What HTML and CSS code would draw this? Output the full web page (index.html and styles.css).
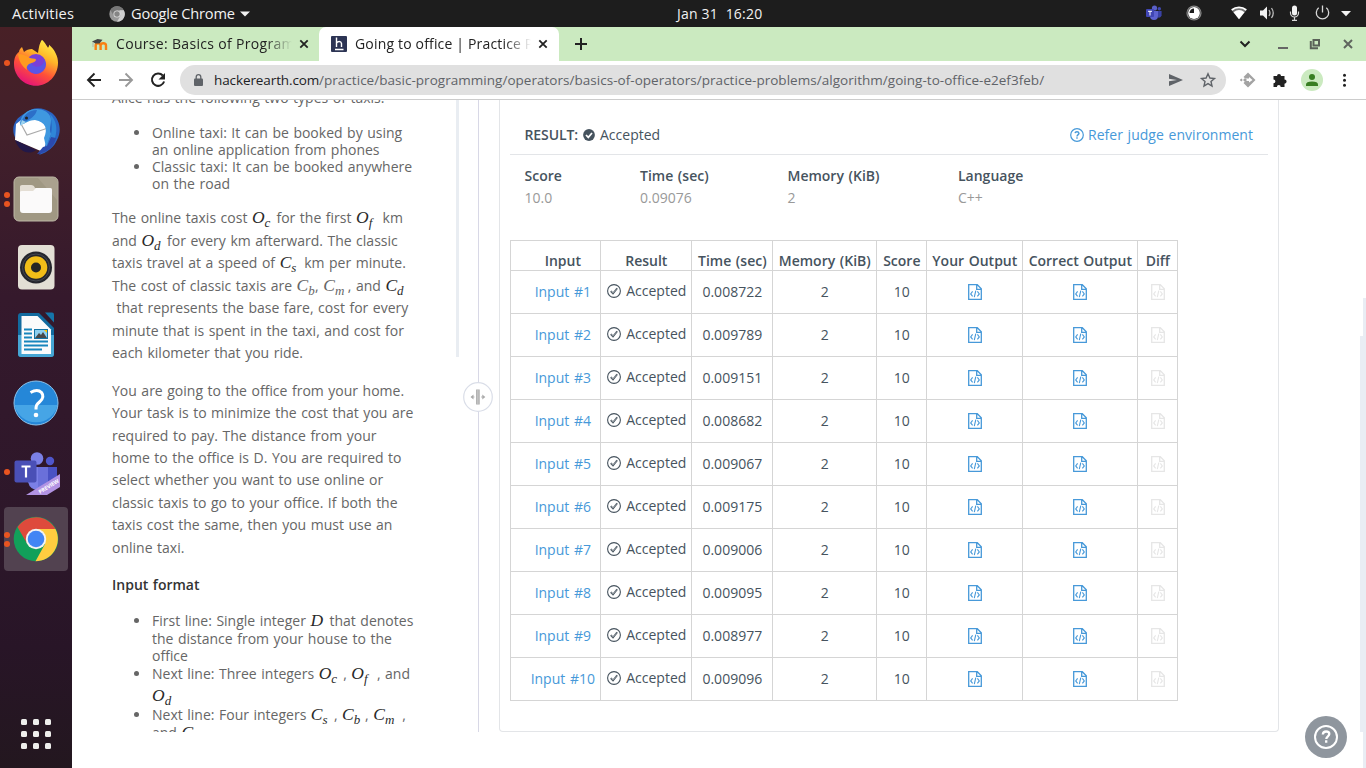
FILE: index.html
```html
<!DOCTYPE html>
<html lang="en">
<head>
<meta charset="utf-8">
<title>Going to office | Practice Problems</title>
<link rel="stylesheet" href="styles.css">
</head>
<body>
<svg class="defs" width="0" height="0">
  <symbol id="file" viewBox="0 0 14 16"><path d="M.7.7h8.600l4 4v10.600H.7z M8.700 .7v4.600h4.600" fill="none" stroke="currentColor" stroke-width="1.300"/><path d="M4.600 7.400 2.700 9.900l1.900 2.500M9.400 7.400l1.900 2.500-1.900 2.500M7.800 6.700l-1.500 6.500" fill="none" stroke="currentColor" stroke-width="1.100"/></symbol>
  <symbol id="ok" viewBox="0 0 14 14"><circle cx="7" cy="7" r="6.400" fill="none" stroke="currentColor" stroke-width="1.100"/><path d="M3.800 7.200 6 9.500l4.200-5.200" fill="none" stroke="currentColor" stroke-width="1.800"/><path d="M4.200 7.400 6 9.100l3.900-4.600" fill="none" stroke="#fff" stroke-width=".4"/></symbol>
</svg>
<div class="topbar">
  <span class="act">Activities</span>
  <svg class="tchrome" width="16" height="16" viewBox="0 0 16 16"><circle cx="8" cy="8" r="7.700" fill="#999"/><path d="M1.400 4A7.700 7.700 0 0 1 14.800 4.200H8L4.700 9.800z" fill="#777"/><path d="M14.800 4.200A7.700 7.700 0 0 1 8 15.700l3.400-5.800L10.500 4.200z" fill="#d0d0d0"/><circle cx="8" cy="8" r="3.600" fill="#ddd"/><circle cx="8" cy="8" r="2.700" fill="#858585"/></svg>
  <span class="app">Google Chrome</span>
  <svg class="caret" width="10" height="6" viewBox="0 0 10 6"><path d="M0 .4h10L5 5.600z" fill="#f2f2f2"/></svg>
  <span class="clock">Jan 31&nbsp; 16:20</span>
  <div class="tray">
    <svg width="222" height="27" viewBox="1144 0 222 27">
      <circle cx="1154.500" cy="8" r="2.600" fill="#5a60c8"/><circle cx="1159.300" cy="8.800" r="1.700" fill="#4048b0"/><path d="M1150 11h8v5a4 4 0 0 1-8 0z" fill="#5d62d0"/><path d="M1158 11h3.600v4.500a3 3 0 0 1-3.600 2z" fill="#3a42a5"/><rect x="1146" y="9" width="8" height="8" rx="1" fill="#4046b4"/><path d="M1148 11.300h4M1150 11.300v4.200" stroke="#fff" stroke-width="1"/>
      <circle cx="1194" cy="13" r="7.600" fill="#888"/><circle cx="1194" cy="13" r="6.300" fill="#1d1d1d"/><circle cx="1194" cy="13" r="5.900" fill="#fff"/><path d="M1194 13h-4.500a4.500 4.500 0 0 1 4.500-4.500z" fill="#1d1d1d"/>
      <path d="M1231.500 10a11.500 11.500 0 0 1 15 0l-7.500 9.300z" fill="#777"/><path d="M1233.500 12.200a9 9 0 0 1 11 0l-5.500 7.100z" fill="#fff"/><path d="M1231.700 10a11.500 11.500 0 0 1 14.600 0" stroke="#fff" stroke-width="1.800" fill="none"/>
      <path d="M1260 10.500h3l4-4v13l-4-4h-3z" fill="#f2f2f2"/><path d="M1269 10q2 3 0 6M1271.500 8q3.500 5 0 10" stroke="#bbb" stroke-width="1.300" fill="none"/>
      <rect x="1292" y="5.500" width="5" height="10" rx="2.500" fill="#f2f2f2"/><path d="M1290.500 11.500v1.500a4 4 0 0 0 8 0v-1.500M1294.500 17v3.300M1292 20.300h5" stroke="#d8d8d8" stroke-width="1.200" fill="none"/>
      <path d="M1318.700 7.800a6.200 6.200 0 1 0 7.600 0M1322.500 5.500v7" stroke="#d8d8d8" stroke-width="1.300" fill="none"/>
      <path d="M1341 11h10l-5 5.300z" fill="#f2f2f2"/>
    </svg>
  </div>
</div>
<div class="desk">
  <nav class="dock">
    <div class="app-slot s1"><i class="dots"><b></b></i>
      <svg width="48" height="48" viewBox="0 0 48 48"><defs><linearGradient id="ff" x1=".8" y1="0" x2=".3" y2="1"><stop offset="0" stop-color="#fff44a"/><stop offset=".35" stop-color="#ffb529"/><stop offset=".65" stop-color="#ff5038"/><stop offset="1" stop-color="#e3107c"/></linearGradient></defs><path d="M30 .8c3 3 4 5 6 8 1-1 1-2 1-3 6 5 9 12 9 18 0 13-10 23-22 23S2 37 2 25c0-6 2-10 5-12 0-2 1-3 3-5l2 5c2-2 5-3 8-3l6 4c1-5 1-9 4-13.200z" fill="url(#ff)"/><circle cx="24" cy="25" r="10" fill="#7a3fd8"/><path d="M14 25a10 10 0 0 0 19 4c1-3 1-6-1-9 1 7-7 9-10 7-4-2-2-5 2-6-4-3-8-2-10 4z" fill="#5a55e6"/><path d="M6 15c5 0 9 2 12 4 3 1 6 0 6 2-1 3-6 3-7 4-2 2-3 3-2 6-5-4-8-8-9-16z" fill="#ff9a20"/></svg></div>
    <div class="app-slot s2">
      <svg width="48" height="48" viewBox="0 0 48 48"><path d="M14 6C20-.500 31-.500 40 6c8 7 10 18 5 27-3 7-9 12-18 15l6-7L4 32C-1 24 0 12 14 6z" fill="#2a63c2"/><path d="M38 7c6 6 8 14 5 24-2 6-6 10-12 14l6-12c4-9 3-17 1-26z" fill="#2f86d8"/><path d="m4 17 9-7 22 2 1 18-5 15L3 33z" fill="#fff"/><path d="m8 15 7 13 21-7" stroke="#aaa" stroke-width="1.200" fill="none"/><path d="M8 18c0-9 6-16 17-16 6 0 11 3 13 7 3 6-2 12 1 18l-5 13-2-9c4-9 2-16-9-18-6 0-8 3-15 5z" fill="#3f98e0"/><path d="M9 17c2-8 7-14 16-14-2 7-7 9-12 12z" fill="#2c6fc8"/><path d="m8 19 2-6 4 2z" fill="#9fd4ee"/><circle cx="14.500" cy="11" r="1.500" fill="#222"/><path d="m3 33 21 10c-8 6-17 1-21-10z" fill="#221849"/><path d="m25 47 6-7 4-1 4-9 5 1c-2 9-9 15-19 16z" fill="#2b49ad"/></svg></div>
    <div class="app-slot s3"><i class="dots"><b></b><b></b></i>
      <svg width="48" height="48" viewBox="0 0 48 48"><rect x="2" y="2" width="44" height="44" rx="5" fill="#a09883" stroke="#beb8a7"/><path d="M26 3h15q4 0 4 4v18z" fill="#aaa18e"/><path d="M8 13V11.500Q8 10 10 10h9q3 0 4 3h15q2 0 2 2v4H8z" fill="#e4ded4"/><path d="M8 17q0-1 2-1h11l3-3h14q2 0 2 2v20q0 3-3 3H11q-3 0-3-3z" fill="#fbfafa"/></svg></div>
    <div class="app-slot s4">
      <svg width="48" height="48" viewBox="0 0 48 48"><rect x="6" y="2" width="36.500" height="44.500" rx="4" fill="#e3dfd5"/><circle cx="24" cy="24.500" r="16" fill="#25262d"/><circle cx="24" cy="24.500" r="13.500" fill="none" stroke="#454850"/><circle cx="24" cy="24.500" r="11.300" fill="#f1bd18"/><circle cx="24" cy="24.500" r="5" fill="#252525"/></svg></div>
    <div class="app-slot s5">
      <svg width="48" height="48" viewBox="0 0 48 48"><path d="M9 2h18l15 15v26q0 3-3 3H9q-3 0-3-3V5q0-3 3-3z" fill="#126b9f"/><path d="M6 24h36v19q0 3-3 3H9q-3 0-3-3z" fill="#46a6d4"/><path d="M33 1.500h7q2 0 2 2v8z" fill="#1575a9"/><path d="M9.500 5h16L39 18.500V43H9.500z" fill="#fbfbfb"/><path d="M12 18.500h8M12 22.500h8M12 26.500h8M12 30.500h24M12 34.500h24M12 38.500h18" stroke="#1786bd" stroke-width="1.800"/><rect x="22.500" y="18.500" width="13" height="9" fill="#8dd0f0" stroke="#1474a5"/><path d="m23 27 4-5 2 2 2-3 4 6z" fill="#47494a"/><path d="M32 19h3v3z" fill="#ffc400"/></svg></div>
    <div class="app-slot s6">
      <svg width="48" height="48" viewBox="0 0 48 48"><circle cx="24" cy="24" r="22" fill="#2587d8" stroke="#8cc4ed"/><path d="M2.500 26h43a22 22 0 0 1-43 0z" fill="#46a5e6"/><path d="M18.500 13.500q7-4 11 0c3 4 1 7-2 9.500-3 2.500-3.500 3.500-3.500 7.500" stroke="#fff" stroke-width="3" fill="none"/><circle cx="24" cy="36" r="2.300" fill="#fff"/></svg></div>
    <div class="app-slot s7"><i class="dots"><b></b></i>
      <svg width="48" height="48" viewBox="0 0 48 48"><circle cx="25" cy="10.500" r="6.300" fill="#7b80e6"/><circle cx="38" cy="13" r="4.200" fill="#4f56cb"/><path d="M30 19h15v14q-3 7-12 6z" fill="#4a52c4"/><path d="M16 19h20v14q-2 9-10 9t-10-8z" fill="#7b80e6"/><path d="M26 19h10v15l-10 5z" fill="#6a70da"/><rect x="2.500" y="12.500" width="22" height="22" rx="2" fill="#4a50b6"/><path d="M9.500 18.500h9M14 18.500v11" stroke="#fff" stroke-width="2.200"/><path d="M14 47 48 26v13L35 47z" fill="#b293e3"/><text class="preview" transform="translate(28 46) rotate(-32)">PREVIEW</text></svg></div>
    <div class="app-slot s8"><i class="dots"><b></b><b></b></i>
      <svg width="48" height="48" viewBox="0 0 48 48"><circle cx="24" cy="24" r="22.300" fill="#11a05a"/><path d="M5.500 12A22.300 22.300 0 0 1 43.500 14H24l-8.700 15z" fill="#de4a3c"/><path d="M43.500 14A22.300 22.300 0 0 1 23.500 46.300L33 29 24 14z" fill="#ffcd40"/><circle cx="24" cy="24" r="10.200" fill="#f3f3f3"/><circle cx="24" cy="24" r="8.300" fill="#4285f4"/></svg></div>
    <div class="grid9"><i></i><i></i><i></i><i></i><i></i><i></i><i></i><i></i><i></i></div>
  </nav>
  <main class="browser">
    <div class="tabs">
      <div class="tab">
        <svg width="16" height="16" viewBox="0 0 16 16"><path d="M3.700 14V9.500q0-2.300 2.300-2.300t2.600 2.300V14M8.600 9.500q0-2.300 2.700-2.300t2.700 2.300V14" stroke="#f98012" stroke-width="2.400" fill="none"/><path d="M0 5.500 5.500 3 10.500 3.800 7.500 7.500H3.500z" fill="#444"/><path d="M1 6v5" stroke="#aaa" stroke-width=".8"/></svg>
        <span class="tt t1">Course: Basics of Programm</span>
        <svg class="x" width="10" height="10" viewBox="0 0 10 10"><path d="m1.300 1.300 7.400 7.400M8.700 1.300 1.300 8.700" stroke="#222" stroke-width="1.800"/></svg>
      </div>
      <div class="tab on">
        <svg width="16" height="16" viewBox="0 0 16 16"><rect width="16" height="16" rx="1" fill="#2c3454"/><path d="M5.500 1.500v9.500M5.500 7q1-1.500 2.800-1.500T10.500 7.500V11M4 13.500h8.500" stroke="#fff" stroke-width="1.400" fill="none"/></svg>
        <span class="tt t2">Going to office | Practice Pr</span>
        <svg class="x" width="10" height="10" viewBox="0 0 10 10"><path d="m1.300 1.300 7.400 7.400M8.700 1.300 1.300 8.700" stroke="#222" stroke-width="1.800"/></svg>
      </div>
      <svg class="new" width="12" height="12" viewBox="0 0 12 12"><path d="M6 0v12M0 6h12" stroke="#222" stroke-width="2"/></svg>
      <svg class="wins" width="130" height="34" viewBox="1236 27 130 34"><path d="m1240.500 41.500 4.500 4.500 4.500-4.500" stroke="#222" stroke-width="2" fill="none"/><path d="M1278 48h10" stroke="#666" stroke-width="2"/><path d="M1313.500 40h5.500v5.500h-5.500zM1310.800 41v7.200h7.200" stroke="#5a6258" stroke-width="2" fill="none"/><path d="m1344 40 8 8M1352 40l-8 8" stroke="#5f655e" stroke-width="2"/></svg>
    </div>
    <div class="tools">
      <svg width="108" height="38" viewBox="72 61 108 38"><path d="M101 80H88M94.500 73.500 88 80l6.500 6.500" stroke="#222" stroke-width="1.900" fill="none"/><path d="M119 80h13M125.500 73.500 132 80l-6.500 6.500" stroke="#999" stroke-width="1.900" fill="none"/><path d="M162.800 75.500a6.200 6.200 0 1 0 1.300 6" stroke="#222" stroke-width="2" fill="none"/><path d="M165 73v6.500h-6.500z" fill="#222"/></svg>
      <div class="omni">
        <svg width="9" height="12" viewBox="0 0 9 12"><rect y="4.500" width="9" height="7.500" rx="1" fill="#5f6368"/><path d="M2.200 5V3q0-2.300 2.300-2.300T6.800 3v2" stroke="#5f6368" stroke-width="1.300" fill="none"/></svg>
        <span class="host">hackerearth.com</span><span class="path">/practice/basic-programming/operators/basics-of-operators/practice-problems/algorithm/going-to-office-e2ef3feb/</span>
        <svg class="send" width="60" height="30" viewBox="1166 65 60 30"><path d="m1169 74 14 6-14 6v-4.700l8-1.300-8-1.300z" fill="#5f6368"/><path d="m1208 73.800 1.900 4.200 4.600.5-3.500 3 1 4.500-4-2.400-4 2.400 1-4.500-3.500-3 4.600-.5z" stroke="#5f6368" stroke-width="1.400" fill="none"/></svg>
      </div>
      <svg width="140" height="38" viewBox="1226 61 140 38"><path d="m1248 72.500 7.500 7.500-7.500 7.500-4.500-4.500 2-2h3.500v1.500l3.500-2.500-3.500-3v1.500h-3.500l-2-1.500z" fill="#a3a3a3"/><path d="m1243 80 2-2 2 2-2 2zM1239.800 80l1.500-1.500 1.500 1.500-1.500 1.500z" fill="#a3a3a3"/><path d="M1273.500 76h3.500a2 2 0 1 1 4 0h3.500v3.500a2.100 2.100 0 1 1 0 4.200V87h-3.800a1.900 1.900 0 0 0-3.800 0h-3.400v-3.800a1.900 1.900 0 0 0 0-3.800z" fill="#222"/><circle cx="1312" cy="80" r="11" fill="#cbeac0"/><circle cx="1312" cy="77" r="3" fill="#387e22"/><path d="M1306 86v-1.500q0-3 6-3t6 3V86z" fill="#387e22"/><circle cx="1344.500" cy="75.300" r="1.500" fill="#222"/><circle cx="1344.500" cy="80.300" r="1.500" fill="#222"/><circle cx="1344.500" cy="85.300" r="1.500" fill="#222"/></svg>
    </div>
    <div class="page">
      <section class="problem">
        <p class="first">Alice has the following two types of taxis:</p>
        <ul class="l1">
          <li>Online taxi: It can be booked by using<br>an online application from phones</li>
          <li>Classic taxi: It can be booked anywhere<br>on the road</li>
        </ul>
        <p class="p1">The online taxis cost <var>O<sub>c</sub></var> for the first <var class="w22">O<sub>f</sub></var> km<br>and <var class="w21">O<sub>d</sub></var>&nbsp;for every km afterward. The classic<br>taxis travel at a speed of <var>C<sub>s</sub></var> km per minute.<br>The cost of classic taxis are <var class="lt w18">C<sub>b</sub></var>, <var class="lt w24">C<sub>m</sub></var>, and <var>C<sub>d</sub></var><br>&nbsp;that represents the base fare, cost for every<br>minute that is spent in the taxi, and cost for<br>each kilometer that you ride.</p>
        <p class="p2">You are going to the office from your home.<br>Your task is to minimize the cost that you are<br>required to pay. The distance from your<br>home to the office is D. You are required to<br>select whether you want to use online or<br>classic taxis to go to your office. If both the<br>taxis cost the same, then you must use an<br>online taxi.</p>
        <h2>Input format</h2>
        <ul class="l2">
          <li>First line: Single integer <var class="w14">D</var> that denotes<br>the distance from your house to the<br>office</li>
          <li>Next line: Three integers <var>O<sub>c</sub></var> , <var class="w21">O<sub>f</sub></var> , and<span class="tall"><var>O<sub>d</sub></var></span></li>
          <li>Next line: Four integers <var class="w18">C<sub>s</sub></var> , <var class="w18">C<sub>b</sub></var> , <var class="w24">C<sub>m</sub></var> ,<br>and <var>C<sub>d</sub></var></li>
        </ul>
        <i class="thumb"></i>
      </section>
      <div class="split"><svg class="grip" width="30" height="30" viewBox="0 0 30 30"><circle cx="15" cy="15" r="14.300" fill="#fff" stroke="#dadee8" stroke-width="1.200"/><path d="M14.900 7.500v15" stroke="#aaa" stroke-width="3.600"/><path d="M14.900 8v14" stroke="#d0d0d0" stroke-width="1"/><path d="M11.500 15H8.500M18 15h3" stroke="#bbb" stroke-width="1.200"/><path d="m7.500 15 3-2.500v5zM22.300 15l-3-2.500v5z" fill="#aaa"/></svg></div>
      <section class="result">
        <div class="panel">
          <div class="rhead"><strong>RESULT:</strong><svg class="badge" width="12" height="12" viewBox="0 0 12 12"><circle cx="6" cy="6" r="5.900" fill="#46535e"/><path d="m3 6 2.300 2.400L9 4" stroke="#fff" stroke-width="1.700" fill="none"/></svg><span>Accepted</span>
            <a class="refer"><svg width="14" height="14" viewBox="0 0 14 14"><circle cx="7" cy="7" r="6.300" fill="none" stroke="currentColor" stroke-width="1.200"/><path d="M5 5.200Q5.300 3.700 7 3.700T9 5.300C9 6.600 7 6.700 7 8.500M7 9.300v1.500" stroke="currentColor" stroke-width="1.400" fill="none"/></svg>Refer judge environment</a></div>
          <dl class="stats"><div class="c1"><dt>Score</dt><dd>10.0</dd></div><div class="c2"><dt>Time (sec)</dt><dd>0.09076</dd></div><div class="c3"><dt>Memory (KiB)</dt><dd>2</dd></div><div><dt>Language</dt><dd>C++</dd></div></dl>
          <table>
            <colgroup><col class="k1"><col class="k2"><col class="k3"><col class="k4"><col class="k5"><col class="k6"><col class="k7"><col class="k8"></colgroup>
            <thead><tr><th>Input</th><th>Result</th><th>Time (sec)</th><th>Memory (KiB)</th><th>Score</th><th>Your Output</th><th>Correct Output</th><th>Diff</th></tr></thead>
            <tbody id="rows"></tbody>
          </table>
        </div>
        <i class="bar"></i><i class="bar inner"></i>
        <div class="help"><svg width="42" height="42" viewBox="0 0 42 42"><circle cx="21" cy="21" r="11" fill="none" stroke="#fff" stroke-width="2"/><path d="M17.800 18.500q.3-3 3.300-3 3.200 0 3.200 2.600c0 2.300-3 2.200-3 5M21.200 24.300v2.400" stroke="#fff" stroke-width="2.300" fill="none"/></svg></div>
      </section>
    </div>
  </main>
</div>
<script src="rows.js"></script>
</body>
</html>
```
FILE: styles.css
```css
* { box-sizing: border-box; }
body { margin: 0; width: 1366px; height: 768px; overflow: hidden; background: #fff; font: 14px/22.4px "Open Sans", "Noto Sans", sans-serif; }
.defs { position: absolute; }
svg { display: block; flex: none; }
p, ul, h2, dl, dd { margin: 0; padding: 0; }

.topbar { height: 27px; background: #1d1d1d; color: #f2f2f2; display: flex; align-items: center; font-size: 14.6px; line-height: 27px; white-space: nowrap; }
.act { width: 97px; padding-left: 12px; letter-spacing: .2px; }
.tchrome { margin: 0 6px 0 12px; }
.app { width: 104px; letter-spacing: -.2px; }
.caret { margin-left: 5px; }
.clock { margin-left: 427px; width: 86px; font-size: 14px; letter-spacing: .2px; }
.tray { margin-left: auto; }

.desk { display: flex; height: 741px; }
.dock { width: 72px; background: linear-gradient(#482026 0, #43202a 90px, #35192c 270px, #2d172a 500px, #281527 620px, #23171f 741px); display: flex; flex-direction: column; padding: 4px 4px 0; }
.app-slot { height: 64px; margin-bottom: 4px; display: flex; align-items: center; justify-content: center; position: relative; flex: none; }
.s6 { margin-bottom: 5px; }
.s7 { margin-bottom: 3px; }
.s8 { background: #524250; border-radius: 4px; }
.dots { position: absolute; left: 0; display: flex; flex-direction: column; gap: 3px; }
.dots b { width: 6px; height: 6px; border-radius: 50%; background: #e95420; }
.preview { font: 700 5.4px "Open Sans", sans-serif; fill: #fff; letter-spacing: -.1px; }
.grid9 { display: grid; grid-template-columns: repeat(3, 6px); gap: 6px; margin: auto auto 19px; }
.grid9 i { height: 6px; border-radius: 1.5px; background: #eeeeec; }

.browser { width: 1294px; display: flex; flex-direction: column; }
.tabs { height: 34px; background: #cbeac0; display: flex; align-items: center; }
.tab { width: 247px; height: 34px; display: flex; align-items: center; padding-left: 20px; }
.tab.on { width: 240px; padding-left: 12px; background: #fff; border-radius: 7px 7px 0 0; }
.tt { width: 176px; margin-left: 8px; overflow: hidden; white-space: nowrap; color: #222; -webkit-mask-image: linear-gradient(90deg, #000 150px, transparent 176px); mask-image: linear-gradient(90deg, #000 150px, transparent 176px); }
.t1 { letter-spacing: .32px; }
.t2 { letter-spacing: .17px; }
.x { margin-left: 7px; }
.new { margin-left: 16px; }
.wins { margin-left: auto; }
.tools { height: 39px; border-bottom: 1px solid #ccc; display: flex; align-items: center; }
.omni { width: 1046px; height: 30px; border-radius: 15px; background: #e0e0e0; display: flex; align-items: center; padding-left: 14px; font-size: 13.5px; white-space: nowrap; color: #5f6368; }
.host { width: 105px; margin-left: 11px; color: #202124; letter-spacing: -.1px; }
.path { letter-spacing: .03px; }
.send { margin-left: auto; }

.page { height: 668px; display: flex; align-items: flex-start; }
.problem { width: 406px; height: 632px; overflow: hidden; padding-left: 40px; color: #666; word-spacing: .9px; white-space: nowrap; position: relative; }
.first { margin-top: -12.6px; }
ul { list-style: none; padding-left: 40px; }
li { position: relative; }
li::before { content: ""; position: absolute; left: -18px; top: 6px; width: 5px; height: 5px; border-radius: 50%; background: #666; }
.l1 { margin-top: 14.2px; line-height: 17.1px; }
.p1 { margin-top: 14.9px; line-height: 22.5px; }
.p2 { margin-top: 15px; }
h2 { margin-top: 15px; font-size: 14px; font-weight: 600; color: #333; }
.l2 { margin-top: 15.6px; line-height: 17.6px; }
.tall { display: block; height: 23.6px; line-height: 27.6px; }
var { display: inline-block; width: 20px; font: italic 17.5px/0 "Liberation Serif", serif; color: #2a2a2a; word-spacing: 0; }
var.lt { color: #666; }
.w14 { width: 14.5px; }
.w18 { width: 18.5px; }
.w21 { width: 21px; }
.w22 { width: 22px; }
.w24 { width: 24.5px; }
sub { font-size: 13px; line-height: 0; vertical-align: -3.5px; letter-spacing: .3px; }
.thumb { position: absolute; left: 384px; top: 0; width: 3px; height: 257px; background: #e9edf2; }
.split { width: 1px; height: 632px; background: #d8d8e6; position: relative; }
.grip { position: absolute; left: -15px; top: 282px; }

.result { width: 887px; height: 668px; position: relative; padding-left: 20px; color: #46535e; word-spacing: 1px; }
.panel { width: 780px; height: 632px; border: 1px solid #e3e5e8; border-top: 0; border-radius: 0 0 4px 4px; padding: 0 10px; }
.rhead { height: 55px; border-bottom: 1px solid #e3e5e8; display: flex; align-items: center; padding: 16.5px 15px 0 14.5px; white-space: nowrap; }
.rhead strong { width: 54px; font-weight: 600; letter-spacing: -.1px; }
.badge { margin: 0 5px 0 4.5px; }
.refer { margin-left: auto; display: flex; align-items: center; gap: 4px; color: #4799d9; letter-spacing: .03px; }
.stats { height: 85px; padding: 10px 0 0 14.5px; display: flex; }
.stats .c1 { width: 115.5px; }
.stats .c2 { width: 147.5px; }
.stats .c3 { width: 170.5px; }
dt { font-weight: 600; }
dd { color: #999; }
table { table-layout: fixed; width: 668px; border-collapse: collapse; text-align: center; white-space: nowrap; }
.k1 { width: 90px; } .k2 { width: 91px; } .k3 { width: 81px; } .k4 { width: 104px; }
.k5 { width: 50px; } .k6 { width: 96px; } .k7 { width: 115px; } .k8 { width: 40px; }
th, td { border: 1px solid #d5d5d5; padding: 0 0 0 .6px; }
th { height: 30px; font-weight: 600; line-height: 18px; padding-top: 11px; }
td { height: 43px; }
th:first-child, td:first-child { padding-left: 14.6px; }
td:first-child { color: #4799d9; }
td svg { margin: 0 auto; color: #4799d9; }
td:last-child svg { color: #e6e6e6; }
.st { display: flex; align-items: center; justify-content: center; gap: 5px; margin-top: -2px; padding-left: 1px; }
.st svg { margin: 0; color: #46535e; }
.bar { position: absolute; right: 0; top: 198px; width: 3px; height: 470px; background: #e9edf4; }
.bar.inner { right: 3px; top: 236px; height: 396px; }
.help { position: absolute; left: 826px; top: 616px; width: 42px; height: 42px; border-radius: 50%; background: #8f969e; }
```
FILE: rows.js
```js
const times = ['0.008722', '0.009789', '0.009151', '0.008682', '0.009067', '0.009175', '0.009006', '0.009095', '0.008977', '0.009096'];
const file = '<svg width="14" height="16"><use href="#file"/></svg>';
document.getElementById('rows').innerHTML = times.map((t, i) =>
  `<tr><td>Input #${i + 1}</td><td><div class="st"><svg width="14" height="14"><use href="#ok"/></svg>Accepted</div></td><td>${t}</td><td>2</td><td>10</td><td>${file}</td><td>${file}</td><td>${file}</td></tr>`
).join('');
```
